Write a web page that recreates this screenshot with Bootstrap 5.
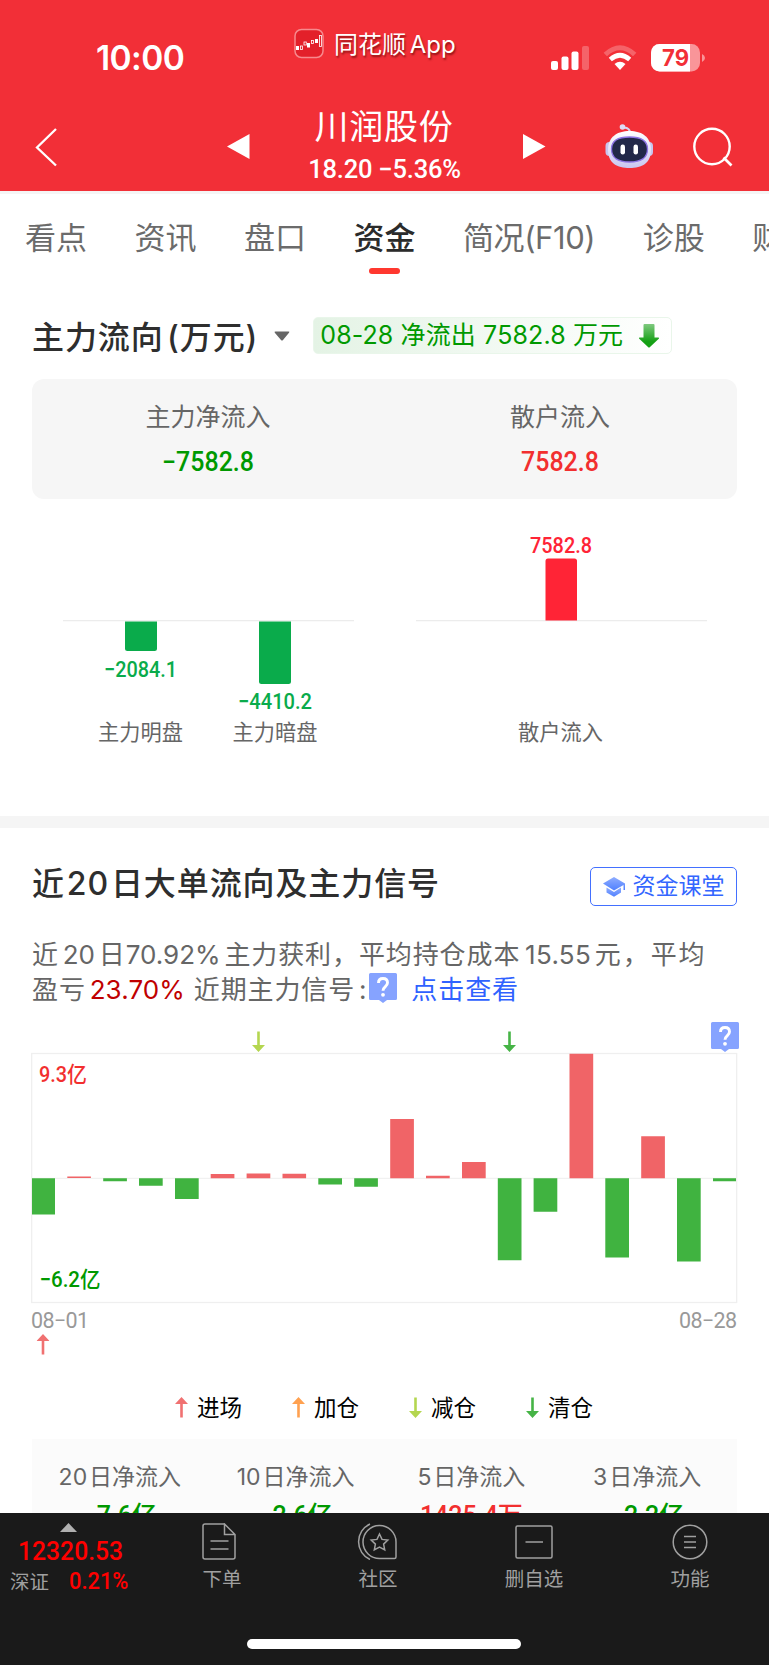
<!DOCTYPE html>
<html lang="zh-CN">
<head>
<meta charset="utf-8">
<meta name="viewport" content="width=device-width, initial-scale=1">
<title>川润股份 - 资金</title>
<link href="https://cdn.jsdelivr.net/npm/bootstrap@5.3.0/dist/css/bootstrap.min.css" rel="stylesheet">
<style>
  body { font-family: Inter, "Noto Sans CJK SC", sans-serif; color: #333; background: #fff; overflow: hidden; }
  .screen { width: 769px; height: 1665px; }
  .num { font-family: Roboto, "Noto Sans CJK SC", sans-serif; font-weight: 500; }
  .lh1 { line-height: 1; }
  svg { display: block; flex: none; }
  .topbar { height: 191px; background: #f22f37; color: #fff; }
  .status { height: 96px; padding: 28px 64px 0 96px; }
  .clock { font-size: 33.5px; font-weight: 600; width: 198px; margin-top: 14px; letter-spacing: -.6px; }
  .brand { font-size: 24px; text-shadow: 1px 2px 2px rgba(90,0,0,.65); margin-left: 10px; margin-top: 5px; word-spacing: -3px; }
  .titlebar { height: 95px; }
  .stock { width: 273px; padding-right: 5px; }
  .stock-name { font-size: 34px; letter-spacing: .7px; margin-top: 14px; }
  .stock-price { font-size: 25.5px; margin: 12.5px -1px 0 0; letter-spacing: -.2px; }
  .tabs { height: 99px; border-top: 3px solid #f5f5f5; padding: 28px 0 0 25px; gap: 47.5px; color: #6b6b6b; font-size: 31px; overflow: hidden; white-space: nowrap; }
  .tab-f10 { letter-spacing: -.4px; }
  .tab-on { color: #2b2b2b; font-weight: 500; }
  .tab-on::after { content: ""; display: block; width: 31px; height: 6px; border-radius: 3px; background: #ff382f; margin: 15px auto 0; }
  .headrow { height: 37px; margin: 27px 0 0 32px; }
  .h-title { font-size: 32px; font-weight: 500; color: #2e2e2e; white-space: nowrap; letter-spacing: .9px; word-spacing: -6px; }
  .flowtag { width: 359px; height: 37px; margin-left: 23.5px; padding-left: 6px; border: 1px solid #e9f6ea; border-radius: 5px; background: linear-gradient(90deg,#e4f3e5,#fff); color: #090; font-size: 25px; letter-spacing: .12px; white-space: nowrap; }
  .sumcard { margin: 25px 32px 0; height: 120px; border-radius: 12px; background: #f6f6f6; padding: 26px 1px 0 0; }
  .sumcard .cap { font-size: 25px; color: #666; }
  .sumcard .num { font-size: 27px; margin-top: 19px; transform: scaleX(.925); }
  .green { color: #090; }
  .red { color: #f22f2f; }
  .band { height: 12px; background: #f5f5f5; }
  .row20 { margin: 39px 32px 0; }
  .row20 .h-title { margin-top: -6px; word-spacing: -7.5px; }
  .lesson { width: 147px; height: 39px; border: 1.5px solid #4370ff; border-radius: 5px; color: #3366ff; font-size: 23px; gap: 8px; }
  .para { margin: 30.5px 0 3.5px 32px; font-size: 26px; line-height: 35px; color: #666; white-space: nowrap; letter-spacing: .9px; word-spacing: -4.4px; }
  .para i { font-style: normal; letter-spacing: 0; }
  .para .cost { letter-spacing: .3px; margin-left: 1px; }
  .para .tail { letter-spacing: 1.9px; }
  .para b { font-weight: 400; color: #c00000; letter-spacing: .1px; margin-right: 5px; }
  .para a { color: #2f62ff; text-decoration: none; margin-left: 14px; }
  .para svg { display: inline-block; vertical-align: -4px; margin-left: 2px; }
  .legend { height: 41.5px; font-size: 22.5px; color: #000; padding-left: 175px; }
  .legend > div { width: 117px; gap: 9px; }
  .nets { margin: 0 32px; height: 74px; background: #fbfbfb; overflow: hidden; padding: 27px 2px 0 0; }
  .nets .cap { font-size: 23px; color: #666; white-space: nowrap; word-spacing: -4.5px; }
  .nets .num { font-size: 25px; margin-top: 14.5px; white-space: nowrap; }
  .dock { height: 152px; background: #1a1a1a; color: #a0a0a0; font-size: 19.5px; position: relative; }
  .dock .item { width: 156px; padding-top: 10px; }
  .dock .item span { margin-top: 10px; }
  .idx { transform: scaleX(.95); transform-origin: 0 0; }
  .homebar { position: absolute; left: 247px; bottom: 16px; width: 274px; height: 10px; border-radius: 5px; background: #fff; }
</style>
</head>
<body>
<svg width="0" height="0" class="position-absolute">
  <defs>
    <symbol id="arr" viewBox="0 0 13 21"><path d="M5.2 20.500V7H0L6.500 0 13 7H7.800V20.500z" fill="currentColor"/></symbol>
    <linearGradient id="gArrow" x1="0" y1="0" x2="0" y2="1"><stop offset="0" stop-color="#7fc97f"/><stop offset=".75" stop-color="#14a014"/></linearGradient>
    <linearGradient id="gCap" x1="0" y1="0" x2="0" y2="1"><stop offset="0" stop-color="#8fadff"/><stop offset="1" stop-color="#4f80ff"/></linearGradient>
    <linearGradient id="gHead" x1="0" y1="0" x2="0" y2="1"><stop offset="0" stop-color="#fff"/><stop offset="1" stop-color="#c9c6f0"/></linearGradient>
  </defs>
</svg>
<div class="screen d-flex flex-column">
  <header class="topbar">
    <div class="status d-flex align-items-start">
      <div class="clock lh1">10:00</div>
      <svg width="30" height="31" viewBox="0 0 30 31"><rect x="1" y="1.500" width="28" height="28" rx="6.500" fill="#e3202a" stroke="#f7898d" stroke-width="1.500"/><g fill="#fff"><rect x="2" y="18" width="3" height="4"/><rect x="13" y="15" width="3" height="4.500"/><rect x="21" y="11" width="3" height="4"/></g><g fill="none" stroke="#fff" stroke-width=".8"><rect x="6.500" y="18" width="2" height="3.500"/><rect x="10" y="14" width="2.300" height="3"/><rect x="17.500" y="12.500" width="2" height="3"/><rect x="25.500" y="7.500" width="2" height="11"/></g></svg>
      <div class="brand lh1">同花顺 App</div>
      <div class="d-flex ms-auto" style="margin-top:15.5px">
        <svg width="38" height="28" viewBox="0 0 38 28" fill="#fff"><rect x="0" y="17" width="7" height="9" rx="2"/><rect x="10.500" y="12.500" width="7" height="13.500" rx="2"/><rect x="20.500" y="7.500" width="7" height="18.500" rx="2"/><rect x="31" y="2" width="7" height="24" rx="2" opacity=".25"/></svg>
        <svg width="34" height="28" viewBox="0 0 34 28" fill="none" style="margin-left:14px"><path d="M2.300 10.500Q17-3 31.700 10.500" stroke="#fff" stroke-opacity=".25" stroke-width="5"/><path d="M7.300 15.500Q17 7 26.700 15.500" stroke="#fff" stroke-width="4.600"/><path d="M11.500 20Q17 15.500 22.500 20L17 26z" fill="#fff"/></svg>
        <svg width="54" height="28" viewBox="0 0 54 28" style="margin-left:14px"><defs><clipPath id="bat"><rect width="49" height="27.500" rx="8.500"/></clipPath></defs><g clip-path="url(#bat)"><rect width="49" height="28" fill="#f99599"/><rect width="39" height="28" fill="#fff"/></g><path d="M51 10q3 1.500 3 4t-3 4z" fill="#f99599"/><text x="11" y="22" font-family="Inter" font-size="22.500" font-weight="700" fill="#f22f37" textLength="27" lengthAdjust="spacingAndGlyphs">79</text></svg>
      </div>
    </div>
    <div class="titlebar d-flex">
      <svg width="250" height="95" viewBox="0 0 250 95"><path d="M56 33L37 51.500 56 69.500" fill="none" stroke="#fff" stroke-width="2.300"/><path d="M227 50.500L249.500 38v25z" fill="#fff"/></svg>
      <div class="stock text-center">
        <div class="stock-name lh1">川润股份</div>
        <div class="stock-price num lh1">18.20 −5.36%</div>
      </div>
      <svg width="246" height="95" viewBox="523 96 246 95"><path d="M523 134v25l22.500-12.500z" fill="#fff"/><path d="M630 133q0-5-6-5.500" fill="none" stroke="#d9d5f2" stroke-width="2"/><circle cx="622.500" cy="127" r="2.800" fill="#dedbf5"/><rect x="605.500" y="142" width="8" height="14" rx="4" fill="#c8c5ee"/><rect x="645" y="142" width="8" height="14" rx="4" fill="#c8c5ee"/><path d="M608 150c0-13 9-19 21.500-19s21.500 6 21.500 19-9 18-21.500 18S608 163 608 150z" fill="url(#gHead)"/><path d="M611.500 149c0-8 5-12 18-12s18 4 18 12-5 13-18 13-18-5-18-13z" fill="#222848" stroke="#8d74e4" stroke-width="1.300"/><rect x="620.500" y="144.500" width="4.500" height="10" rx="2.200" fill="#fff"/><rect x="633.500" y="144.500" width="4.500" height="10" rx="2.200" fill="#fff"/><circle cx="712" cy="146.500" r="17.700" fill="none" stroke="#fff" stroke-width="2.400"/><path d="M723.500 157.500l8 8" stroke="#fff" stroke-width="2.600"/></svg>
    </div>
  </header>
  <nav class="tabs d-flex lh1">
    <div>看点</div><div>资讯</div><div>盘口</div><div class="tab-on">资金</div><div class="tab-f10">简况(F10)</div><div>诊股</div><div>财务</div>
  </nav>
  <section>
    <div class="headrow d-flex align-items-center">
      <div class="h-title lh1 pt-1">主力流向 (万元)</div>
      <svg width="16" height="10" viewBox="0 0 16 10" style="margin-left:15.5px"><path d="M1.500 0.500h13q1.500 0 .5 1.200L9 9q-1 1-2 0L.8 1.700Q0 .5 1.500.5z" fill="#666"/></svg>
      <div class="flowtag d-flex align-items-center lh1"><span>08-28 净流出 7582.8 万元</span>
        <svg width="20" height="24" viewBox="0 0 20 24" class="ms-3"><path d="M4.500 1q0-1 1-1h9q1 0 1 1v12.500h4q1 .5 0 1.500L11 23q-1 1-2 0L.5 15q-1-1 0-1.500h4z" fill="url(#gArrow)"/></svg></div>
    </div>
    <div class="sumcard d-flex text-center lh1">
      <div class="w-50"><div class="cap">主力净流入</div><div class="num green">−7582.8</div></div>
      <div class="w-50"><div class="cap">散户流入</div><div class="num red">7582.8</div></div>
    </div>
    <svg width="769" height="317" viewBox="0 499 769 317" font-family="Roboto, 'Noto Sans CJK SC', sans-serif">
      <path d="M63 620.700H354M416 620.700H707" stroke="#ececec" stroke-width="1.300"/>
      <path d="M125 621.500h32v27q0 2.500-2.500 2.500h-27q-2.500 0-2.500-2.500zM259 621.500h32v60q0 2.500-2.500 2.500h-27q-2.500 0-2.500-2.500z" fill="#0aab4b"/>
      <path d="M545.500 620.500v-59.500q0-2.500 2.500-2.500h26.500q2.500 0 2.500 2.500v59.500z" fill="#ff2436"/>
      <g font-size="22" font-weight="500" fill="#0aab4b">
        <text x="104" y="676.500" textLength="73" lengthAdjust="spacingAndGlyphs">−2084.1</text>
        <text x="238" y="709" textLength="74" lengthAdjust="spacingAndGlyphs">−4410.2</text>
        <text x="530" y="553" fill="#ff2436" textLength="62" lengthAdjust="spacingAndGlyphs">7582.8</text>
      </g>
      <g font-family="Noto Sans CJK SC" font-size="21.200" fill="#666" text-anchor="middle"><text x="140.500" y="740">主力明盘</text><text x="275" y="740">主力暗盘</text><text x="560.500" y="740">散户流入</text></g>
    </svg>
  </section>
  <div class="band"></div>
  <section>
    <div class="row20 d-flex align-items-center justify-content-between">
      <div class="h-title lh1">近 20 日大单流向及主力信号</div>
      <div class="lesson d-flex align-items-center justify-content-center lh1">
        <svg width="22" height="20" viewBox="0 0 22 20" fill="url(#gCap)"><path d="M0 6.500L11 0l11 6.500V13h-1.500V8L11 13.500z"/><path d="M3.500 10.500L11 15l7-4.500v5L11 19.800 3.500 15.500z"/></svg>
        <span>资金课堂</span></div>
    </div>
    <div class="para">
      <div>近 <i>20</i> 日<i>70.92%</i> 主力获利，平均持仓成本 <i class="cost">15.55</i> <span class="tail">元，平均</span></div>
      <div>盈亏 <b>23.70%</b> 近期主力信号 :<svg width="28" height="30" viewBox="0 0 28 30"><path d="M1.500 0h25q1.500 0 1.500 1.500v24q0 1.500-1.500 1.500H18l-4 3-4-3H1.500Q0 27 0 25.500v-24Q0 0 1.500 0z" fill="#86a3ff"/><path d="M9.500 10q0-4.500 4.500-4.500t4.500 4.300c0 4-4.500 3.500-4.500 8" fill="none" stroke="#fff" stroke-width="2.900"/><circle cx="14" cy="21.800" r="1.900" fill="#fff"/></svg><a href="#">点击查看</a></div>
    </div>
    <svg width="769" height="387" viewBox="0 1010 769 387" font-family="Roboto, 'Noto Sans CJK SC', sans-serif">
      <rect x="31.700" y="1053.500" width="705" height="249" fill="#fff" stroke="#efefef" stroke-width="1.300"/>
      <path d="M32 1178.300H736" stroke="#eee"/>
      <g fill="#f06467"><path d="M67.300 1176.400h23.600v1.700H67.300zM210.700 1174h23.700v4.300h-23.700zM246.600 1173.500h23.700v4.800h-23.700zM282.500 1173.700h23.600v4.600h-23.600zM390.200 1119h23.700v59.300h-23.700zM426 1175.700h23.700v2.600H426zM462 1162h23.700v16.300H462zM569.500 1053.700h23.700v124.600h-23.700zM641.200 1136.300h23.700v42h-23.700z"/></g>
      <g fill="#40b340"><path d="M32 1178.300h23v36.300H32zM103.200 1178.300h23.700v3h-23.700zM139 1178.300h23.700v7.500H139zM175 1178.300h23.700v20.700H175zM318.300 1178.300H342v6.300h-23.700zM354.200 1178.300h23.700v8.500h-23.700zM497.800 1178.300h23.700v82h-23.700zM533.600 1178.300h23.700v33.500h-23.700zM605.300 1178.300H629v79.200h-23.700zM677 1178.300h23.700v83.300H677zM713 1178.300h23v2.900h-23z"/></g>
      <use href="#arr" x="252" y="1031" width="13" height="21" color="#b4d650" transform="rotate(180 258.500 1041.500)"/>
      <use href="#arr" x="503" y="1031" width="13" height="21" color="#46b446" transform="rotate(180 509.500 1041.500)"/>
      <use href="#arr" x="36.500" y="1334" width="13" height="21" color="#f07171"/>
      <g transform="translate(711 1022)"><path d="M1.500 0h25q1.500 0 1.500 1.500v24q0 1.500-1.500 1.500H18l-4 3-4-3H1.500Q0 27 0 25.500v-24Q0 0 1.500 0z" fill="#86a3ff"/><path d="M9.500 10q0-4.500 4.500-4.500t4.500 4.300c0 4-4.500 3.500-4.500 8" fill="none" stroke="#fff" stroke-width="2.900"/><circle cx="14" cy="21.800" r="1.900" fill="#fff"/></g>
      <g font-size="22" font-weight="500">
        <text x="39" y="1082" fill="#f22f2f" textLength="48" lengthAdjust="spacingAndGlyphs">9.3亿</text>
        <text x="39.500" y="1287" fill="#090" textLength="61" lengthAdjust="spacingAndGlyphs">−6.2亿</text>
      </g>
      <g font-size="21.500" fill="#999"><text x="31" y="1328" textLength="58" lengthAdjust="spacing">08−01</text><text x="679" y="1328" textLength="58" lengthAdjust="spacing">08−28</text></g>
    </svg>
    <div class="legend d-flex lh1">
      <div class="d-flex"><svg width="13" height="21" color="#f07171"><use href="#arr"/></svg>进场</div>
      <div class="d-flex"><svg width="13" height="21" color="#ffa150"><use href="#arr"/></svg>加仓</div>
      <div class="d-flex"><svg width="13" height="21" color="#b4d650"><use href="#arr" transform="rotate(180 6.500 10.500)"/></svg>减仓</div>
      <div class="d-flex"><svg width="13" height="21" color="#46b446"><use href="#arr" transform="rotate(180 6.500 10.500)"/></svg>清仓</div>
    </div>
    <div class="nets d-flex text-center lh1">
      <div class="w-25"><div class="cap">20 日净流入</div><div class="num green">−7.6亿</div></div>
      <div class="w-25"><div class="cap">10 日净流入</div><div class="num green">−2.6亿</div></div>
      <div class="w-25"><div class="cap">5 日净流入</div><div class="num red">1425.4万</div></div>
      <div class="w-25"><div class="cap">3 日净流入</div><div class="num green">−2.2亿</div></div>
    </div>
  </section>
  <footer class="dock d-flex lh1 mt-auto">
    <div style="width:144px">
      <svg width="17" height="9" viewBox="0 0 17 9" style="margin:10px 0 0 60px"><path d="M0 9L8.500 0 17 9z" fill="#b0b0b0"/></svg>
      <div class="num idx" style="margin:6px 0 0 18px;color:#f00;font-size:26px">12320.53</div>
      <div class="d-flex" style="margin:5.5px 0 0 10px"><span style="margin-top:3px">深证</span><span class="num idx" style="margin-left:20px;color:#f00;font-size:23px">0.21%</span></div>
    </div>
    <div class="item d-flex flex-column align-items-center"><svg width="34" height="37" viewBox="0 0 34 37" fill="none" stroke="#a0a0a0" stroke-width="1.500" style="margin-left:-6px"><path d="M22.500 1H3Q1 1 1 3v31q0 2 2 2h28q2 0 2-2V11.500L22.500 1v10.500H33M8.500 18h18M8.500 26h18"/></svg><span>下单</span></div>
    <div class="item d-flex flex-column align-items-center"><svg width="40" height="37" viewBox="0 0 40 37" fill="none" stroke="#a0a0a0" stroke-width="1.500" style="margin-left:-3px"><path d="M23 35.500A16.500 16.500 0 1 1 39 19v15q0 1.500-1.500 1.500zM13 1A19.500 19.500 0 0 0 13 36.500"/><path d="M22.500 11l2.500 5.400 5.800.7-4.200 4 1.100 5.800-5.200-2.800-5.200 2.800 1.100-5.800-4.200-4 5.800-.7z"/></svg><span>社区</span></div>
    <div class="item d-flex flex-column align-items-center"><svg width="38" height="37" viewBox="0 0 38 37" fill="none" stroke="#a0a0a0" stroke-width="1.500"><rect x="1" y="3" width="36" height="32" rx="1.500"/><path d="M10.500 19h17.500"/></svg><span>删自选</span></div>
    <div class="item d-flex flex-column align-items-center"><svg width="36" height="37" viewBox="0 0 36 37" fill="none" stroke="#a0a0a0" stroke-width="1.500"><circle cx="18" cy="19" r="16.800"/><path d="M12 13.500h12M12 19h12M12 24.500h12"/></svg><span>功能</span></div>
    <div class="homebar"></div>
  </footer>
</div>
<script src="https://cdn.jsdelivr.net/npm/bootstrap@5.3.0/dist/js/bootstrap.bundle.min.js"></script>
</body>
</html>
